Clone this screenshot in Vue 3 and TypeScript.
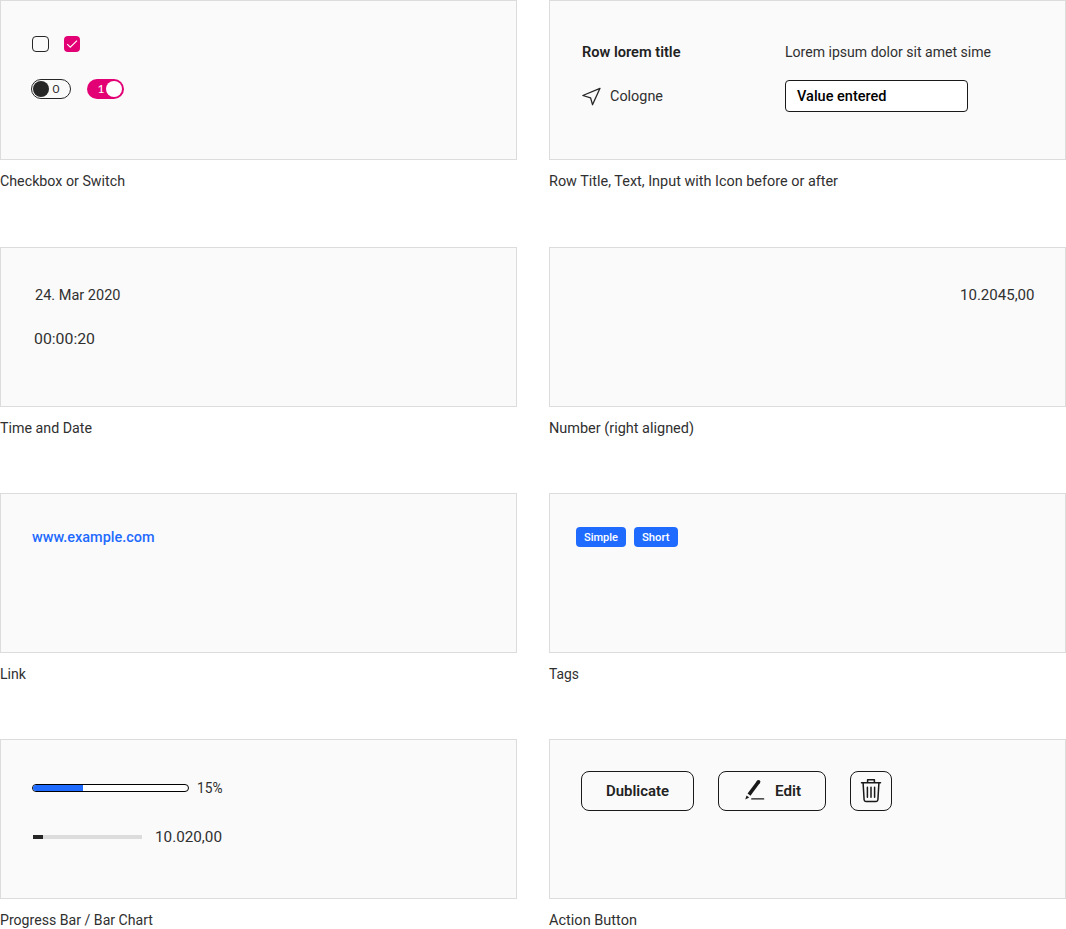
<script setup lang="ts">
import { h } from 'vue'

interface LabelProps {
  text: string
  width: number
}

// Single line of text fitted to a fixed width, baseline 15px below its top.
const Label = (props: LabelProps) =>
  h('svg', { class: 'label', width: props.width, height: 20, role: 'img', 'aria-label': props.text }, [
    h('text', { x: 0, y: 15, textLength: props.width, lengthAdjust: 'spacingAndGlyphs' }, props.text),
  ])
Label.props = ['text', 'width']
</script>

<template>
  <main class="grid">
    <figure>
      <div class="card controls">
        <div class="row checks">
          <span class="check"></span>
          <span class="check on">
            <svg width="16" height="16" viewBox="0 0 16 16"><path d="M3.2 8.2 6.3 11.2 13 4.6" fill="none" stroke="#fff" stroke-width="1.1" /></svg>
          </span>
        </div>
        <div class="row switches">
          <span class="switch"><i class="knob"></i><b>0</b></span>
          <span class="switch active"><b>1</b><i class="knob"></i></span>
        </div>
      </div>
      <figcaption><Label text="Checkbox or Switch" :width="125" /></figcaption>
    </figure>

    <figure>
      <div class="card cells">
        <Label class="bold" text="Row lorem title" :width="98.5" />
        <Label text="Lorem ipsum dolor sit amet sime" :width="206" />
        <div class="row place">
          <svg width="20" height="20" viewBox="0 0 20 20"><path d="M0.8 9.5 18 2.3 10.5 18.7 8.6 11.9Z" fill="none" stroke="#262626" stroke-width="1.3" stroke-linejoin="round" /></svg>
          <Label text="Cologne" :width="53" />
        </div>
        <div class="field"><Label class="medium" text="Value entered" :width="89.5" /></div>
      </div>
      <figcaption><Label text="Row Title, Text, Input with Icon before or after" :width="289" /></figcaption>
    </figure>

    <figure>
      <div class="card time">
        <Label class="date" text="24. Mar 2020" :width="85.5" />
        <Label class="clock" text="00:00:20" :width="61" />
      </div>
      <figcaption><Label text="Time and Date" :width="92" /></figcaption>
    </figure>

    <figure>
      <div class="card number"><Label text="10.2045,00" :width="74.5" /></div>
      <figcaption><Label text="Number (right aligned)" :width="145" /></figcaption>
    </figure>

    <figure>
      <div class="card link"><Label class="medium" text="www.example.com" :width="122.5" /></div>
      <figcaption><Label text="Link" :width="26" /></figcaption>
    </figure>

    <figure>
      <div class="card tags">
        <span class="tag"><Label text="Simple" :width="34" /></span>
        <span class="tag short"><Label text="Short" :width="27.5" /></span>
      </div>
      <figcaption><Label text="Tags" :width="30" /></figcaption>
    </figure>

    <figure>
      <div class="card bars">
        <div class="row progress">
          <span class="track"><i></i></span>
          <Label text="15%" :width="25.5" />
        </div>
        <div class="row chart">
          <span class="line"><i></i></span>
          <Label text="10.020,00" :width="67" />
        </div>
      </div>
      <figcaption><Label text="Progress Bar / Bar Chart" :width="153" /></figcaption>
    </figure>

    <figure>
      <div class="card actions">
        <button class="wide"><Label class="bold" text="Dublicate" :width="63" /></button>
        <button class="edit">
          <svg width="22" height="22" viewBox="0 0 22 22">
            <path d="M15.6 2.7 6 15.6" stroke="#191919" stroke-width="3.6" fill="none" />
            <circle cx="15.5" cy="2.8" r="1.9" fill="#191919" />
            <path d="M3.6 16.4 6.2 18.6 2.2 20.6Z" fill="#191919" />
            <path d="M8.8 19.9H20.6" stroke="#191919" stroke-width="1.4" stroke-linecap="round" />
          </svg>
          <Label class="bold" text="Edit" :width="26" />
        </button>
        <button class="trash" aria-label="Delete">
          <svg width="22" height="24" viewBox="0 0 22 24" fill="none" stroke="#191919" stroke-width="1.5" stroke-linecap="round" stroke-linejoin="round">
            <path d="M1.5 3.7H20.5M7.6 3.5V0.8H14.4V3.5M3.1 4 4.1 20.7Q4.2 22.4 5.9 22.4H16.1Q17.8 22.4 17.9 20.7L18.9 4" />
            <path d="M7.4 8.2V18.2M11 8.2V18.2M14.6 8.2V18.2" />
          </svg>
        </button>
      </div>
      <figcaption><Label text="Action Button" :width="88" /></figcaption>
    </figure>
  </main>
</template>

<style>
body { margin: 0; background: #fff; }
</style>

<style scoped>
.grid {
  display: grid;
  grid-template-columns: 517px 517px;
  grid-template-rows: 247px 246px 246px 190px;
  column-gap: 32px;
  width: 1066px;
  height: 929px;
  overflow: hidden;
  color: #303030;
  font-family: Roboto, "Liberation Sans", sans-serif;
  font-size: 15px;
}
figure { margin: 0; min-width: 0; }
.card {
  box-sizing: border-box;
  width: 517px;
  height: 160px;
  border: 1px solid #dcdcdc;
  background: #fafafa;
}
figcaption { padding-top: 11px; font-size: 14.8px; }
.label { display: block; flex: none; overflow: visible; fill: currentColor; }
.bold { color: #222; font-weight: 700; }
.medium { font-weight: 500; }
.row { display: flex; align-items: center; }

.controls { padding: 35px 0 0 30px; }
.checks { gap: 15px; padding-left: 1px; }
.check { box-sizing: border-box; width: 17px; height: 16px; border: 1.25px solid #262626; border-radius: 4px; }
.check.on { width: 16px; border: 0; background: #e20074; }
.check svg { display: block; }
.switches { gap: 16px; margin-top: 27px; }
.switch {
  box-sizing: border-box;
  display: flex;
  align-items: center;
  width: 40px;
  height: 20px;
  padding-left: 1px;
  border: 1px solid #262626;
  border-radius: 10px;
  font-size: 11.5px;
}
.switch b { width: 8px; margin-left: 3px; font-family: Lato, sans-serif; font-size: 12px; font-weight: 400; line-height: 18px; text-align: center; }
.knob { width: 16px; height: 16px; border-radius: 50%; background: #262626; }
.switch.active { width: 37px; padding-left: 10px; border: 0; background: #e20074; color: #fff; }
.switch.active b { margin: 0 1px 0 0; }
.active .knob { background: #fff; }

.cells {
  display: grid;
  grid-template-columns: 203px 206px;
  grid-template-rows: 38px 32px;
  padding: 41px 0 0 32px;
}
.cells .bold { font-weight: 600; }
.place { height: 32px; gap: 8px; }
.field {
  box-sizing: border-box;
  width: 183px;
  height: 32px;
  padding: 5px 0 0 11px;
  border: 1px solid #191919;
  border-radius: 4px;
  background: #fff;
  color: #000;
}

.time { padding: 37px 0 0 32px; }
.time, .number, .bars { font-size: 15.5px; }
.date { margin-left: 1.5px; }
.clock { margin: 24px 0 0 0.5px; }
.number { display: flex; justify-content: flex-end; padding: 37px 31px 0 0; }
.link { padding: 33px 0 0 31px; color: #1f6bff; }

.tags { display: flex; gap: 8px; padding: 33px 0 0 26px; }
.tag {
  box-sizing: border-box;
  width: 50px;
  height: 20px;
  padding: 0 0 0 8px;
  border-radius: 4px;
  background: #1f6bff;
  color: #fff;
  font-size: 11px;
  font-weight: 500;
}
.tag .label { margin-top: -1px; }
.tag.short { width: 44px; }

.bars { padding: 38px 0 0 31px; }
.progress { gap: 8px; height: 20px; }
.track {
  box-sizing: border-box;
  width: 157px;
  height: 8px;
  margin-top: -1px;
  overflow: hidden;
  border: 1px solid #000;
  border-radius: 4px;
  background: #fff;
}
.track i { display: block; width: 50px; height: 6px; background: #1f6bff; }
.chart { gap: 13px; height: 20px; margin: 29px 0 0 1px; }
.line { width: 109px; height: 4px; background: #dcdcdc; }
.line i { display: block; width: 10px; height: 4px; background: #262626; }

.actions { display: flex; gap: 24px; padding: 31px 0 0 31px; }
button {
  box-sizing: border-box;
  display: flex;
  align-items: center;
  justify-content: center;
  height: 40px;
  margin: 0;
  padding: 0;
  border: 1px solid #191919;
  border-radius: 8px;
  background: transparent;
  color: #191919;
  font: inherit;
}
button .bold { font-weight: 600; }
.wide { width: 113px; }
.edit { width: 108px; gap: 10px; }
.edit > svg:first-child { margin-top: -3px; }
.trash { width: 42px; }
</style>
